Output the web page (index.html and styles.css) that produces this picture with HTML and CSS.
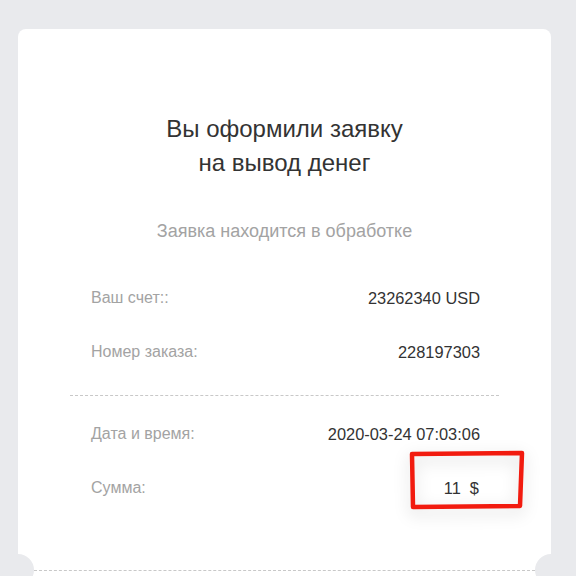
FILE: index.html
```html
<!DOCTYPE html>
<html lang="ru">
<head>
<meta charset="UTF-8">
<meta name="viewport" content="width=device-width, initial-scale=1.0">
<title>Заявка на вывод</title>
<link rel="stylesheet" href="styles.css">
</head>
<body>

<!-- Receipt card -->
<div class="receipt">
    <h1 class="receipt-title">Вы оформили заявку<br>на вывод денег</h1>
    <p class="receipt-status">Заявка находится в обработке</p>

    <div class="receipt-body">
        <div class="receipt-group">
            <div class="receipt-row">
                <span class="row-label">Ваш счет::</span>
                <span class="row-value">23262340 USD</span>
            </div>
            <div class="receipt-row">
                <span class="row-label">Номер заказа:</span>
                <span class="row-value">228197303</span>
            </div>
        </div>

        <div class="receipt-group receipt-group-dashed">
            <div class="receipt-row">
                <span class="row-label">Дата и время:</span>
                <span class="row-value">2020-03-24 07:03:06</span>
            </div>
            <div class="receipt-row">
                <span class="row-label">Сумма:</span>
                <span class="row-value row-amount">11&nbsp; $
                    <!-- hand drawn marker around the amount -->
                    <svg class="marker" width="118" height="62" viewBox="0 0 118 62">
                        <path d="M4 5 L114 4 L112 57 L5 58 Z" fill="none" stroke="#f21b0f" stroke-width="4.5" stroke-linejoin="round"/>
                    </svg>
                </span>
            </div>
        </div>
    </div>

    <div class="receipt-tear"></div>
</div>

</body>
</html>
```

FILE: styles.css
```css
/* Page and receipt card */
body {
    margin: 0;
    background-color: #e9eaed;
    font-family: "Liberation Sans", Arial, sans-serif;
    overflow: hidden;
}

.receipt {
    margin: 29px 0 0 18px;
    width: 533px;
    padding-top: 83px;
    background-color: #fff;
    border-radius: 8px 8px 0 0;
    text-align: center;
}

.receipt-title {
    margin: 0;
    font-size: 24px;
    font-weight: normal;
    line-height: 34px;
    color: #333;
}

.receipt-status {
    margin: 40px 0 0;
    font-size: 18px;
    line-height: 22px;
    color: #a3a3a3;
}

.receipt-body {
    margin: 29px 52px 0 52px;
}

.receipt-group {
    padding: 0 19px 0 21px;
}

.receipt-group-dashed {
    margin-top: 16px;
    padding-top: 11px;
    border-top: 1px dashed #c8c8c8;
}

.receipt-row {
    display: flex;
    justify-content: space-between;
    align-items: center;
    height: 54px;
    font-size: 16px;
}

.row-label {
    color: #a3a3a3;
}

.row-value {
    font-size: 16.4px;
    color: #333;
}

.row-amount {
    position: relative;
    padding-right: 1px;
}

.marker {
    position: absolute;
    left: -36px;
    top: -30px;
    filter: drop-shadow(0 5px 8px rgba(0, 0, 0, 0.16));
}

/* Perforated tear line with side notches */
.receipt-tear {
    position: relative;
    margin: 55px 16px 0;
    height: 30px;
    border-top: 1px dashed #c8c8c8;
}

.receipt-tear::before,
.receipt-tear::after {
    content: "";
    position: absolute;
    top: -17px;
    width: 32px;
    height: 32px;
    border-radius: 50%;
    background-color: #e9eaed;
}

.receipt-tear::before {
    left: -32px;
}

.receipt-tear::after {
    right: -32px;
}
```
